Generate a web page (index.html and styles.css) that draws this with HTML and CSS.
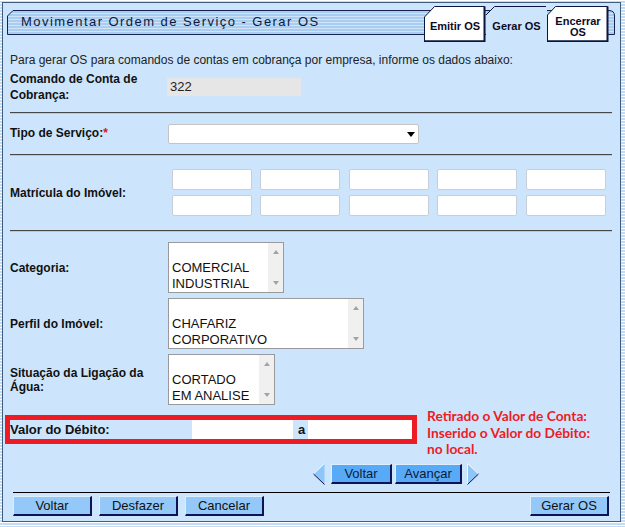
FILE: index.html
```html
<!DOCTYPE html>
<html lang="pt-BR">
<head>
<meta charset="utf-8">
<title>Gerar OS</title>
<link rel="stylesheet" href="styles.css">
</head>
<body>
<div class="panel">
  <div class="header">
    <svg class="bar" width="608" height="25" viewBox="0 0 608 25">
      <defs>
        <pattern id="stripes" width="8" height="3" patternUnits="userSpaceOnUse">
          <rect width="8" height="3" fill="#a9cdf1"/>
          <rect width="8" height="1" fill="#cfe4f9"/>
        </pattern>
      </defs>
      <path d="M0.5 24.5 V6 L6 0.5 H602 Q607.5 0.5 607.5 6 V24.5 Z" fill="url(#stripes)" stroke="#17234d"/>
    </svg>
    <div class="title">Movimentar Ordem de Serviço - Gerar OS</div>
    <div class="tabs">
      <div class="tab tab-emitir">
        <svg class="tab-bg" width="62" height="36" viewBox="0 0 62 36">
          <path d="M0.5 36 V11 L10.5 0.5 H60.5 V35 H0.5" fill="#ffffff" stroke="#0c1440"/>
          <path d="M60.5 0.5 V35.5 H0.5" fill="none" stroke="#0c1440" stroke-width="2"/>
        </svg>
        <span>Emitir OS</span>
      </div>
      <div class="tab tab-gerar">
        <svg class="tab-bg" width="61" height="36" viewBox="0 0 61 36">
          <path d="M0 36 V9 L8.5 0 H61 V36 Z" fill="#cce5fc"/>
          <path d="M0 9 L8.5 0.5 H60" fill="none" stroke="#0c1440"/>
        </svg>
        <span>Gerar OS</span>
      </div>
      <div class="tab tab-encerrar">
        <svg class="tab-bg" width="62" height="36" viewBox="0 0 62 36">
          <path d="M0.5 36 V9 L8.5 0.5 H60.5 V35 H0.5" fill="#ffffff" stroke="#0c1440"/>
          <path d="M60.5 0.5 V35.5 H0.5" fill="none" stroke="#0c1440" stroke-width="2"/>
        </svg>
        <span>Encerrar<br>OS</span>
      </div>
    </div>
  </div>

  <div class="content">
    <p class="intro">Para gerar OS para comandos de contas em cobrança por empresa, informe os dados abaixo:</p>

    <div class="row row-comando">
      <div class="lbl">Comando de Conta de<br>Cobrança:</div>
      <div class="readonly">322</div>
    </div>

    <div class="sep sep1"></div>

    <div class="row row-tipo">
      <div class="lbl lbl-tipo">Tipo de Serviço:<span class="req">*</span></div>
      <div class="select">
        <svg width="8" height="5" viewBox="0 0 8 5"><path d="M0 0 H8 L4 5 Z" fill="#000"/></svg>
      </div>
    </div>

    <div class="sep sep2"></div>

    <div class="row row-mat">
      <div class="lbl">Matrícula do Imóvel:</div>
      <div class="grid">
        <div class="field"></div><div class="field"></div><div class="field"></div><div class="field"></div><div class="field"></div>
        <div class="field"></div><div class="field"></div><div class="field"></div><div class="field"></div><div class="field"></div>
      </div>
    </div>

    <div class="sep sep3"></div>

    <div class="row row-list row-cat">
      <div class="lbl">Categoria:</div>
      <div class="listbox lb-cat">
        <div class="opts"><div class="opt">&nbsp;</div><div class="opt">COMERCIAL</div><div class="opt">INDUSTRIAL</div></div>
        <div class="sbar"><i class="up"></i><i class="down"></i></div>
      </div>
    </div>

    <div class="row row-list row-perfil">
      <div class="lbl">Perfil do Imóvel:</div>
      <div class="listbox lb-perfil">
        <div class="opts"><div class="opt">&nbsp;</div><div class="opt">CHAFARIZ</div><div class="opt">CORPORATIVO</div></div>
        <div class="sbar"><i class="up"></i><i class="down"></i></div>
      </div>
    </div>

    <div class="row row-list row-sit">
      <div class="lbl lbl-sit">Situação da Ligação da<br>Água:</div>
      <div class="listbox lb-sit">
        <div class="opts"><div class="opt">&nbsp;</div><div class="opt">CORTADO</div><div class="opt">EM ANALISE</div></div>
        <div class="sbar"><i class="up"></i><i class="down"></i></div>
      </div>
    </div>

    <div class="row row-valor">
      <div class="redbox">
        <div class="lbl-valor">Valor do Débito:</div>
        <div class="vfield v1"></div>
        <span class="a">a</span>
        <div class="vfield v2"></div>
      </div>
      <div class="note">Retirado o Valor de Conta:<br>Inserido o Valor do Débito:<br>no local.</div>
    </div>

    <div class="nav">
      <svg class="arrow" width="12" height="22" viewBox="0 0 12 22">
        <polygon points="11.5,0.5 0.5,11 11.5,21.5" fill="#8ec6f7"/>
        <path d="M11.5 0.5 L0.5 11" stroke="#eef7ff" fill="none"/>
        <path d="M0.5 11 L11.5 21.5" stroke="#0c1450" fill="none"/>
      </svg>
      <button class="btn-nav nav-voltar">Voltar</button>
      <button class="btn-nav nav-avancar">Avançar</button>
      <svg class="arrow arrow-r" width="12" height="22" viewBox="0 0 12 22">
        <polygon points="0.5,0.5 11.5,11 0.5,21.5" fill="#8ec6f7"/>
        <path d="M0.5 21.5 V0.5 L11.5 11" stroke="#eef7ff" fill="none"/>
        <path d="M11.5 11 L0.5 21.5" stroke="#0c1450" fill="none"/>
      </svg>
    </div>

    <div class="rule"></div>

    <div class="buttons">
      <button class="btn">Voltar</button>
      <button class="btn">Desfazer</button>
      <button class="btn">Cancelar</button>
      <button class="btn btn-gerar">Gerar OS</button>
    </div>
  </div>
</div>
</body>
</html>
```

FILE: styles.css
```css
* { box-sizing: border-box; }
html, body { margin: 0; padding: 0; }
body {
  width: 625px;
  height: 527px;
  overflow: hidden;
  padding: 2px 4px 0 2px;
  background: repeating-linear-gradient(to bottom, #ffffff 0 1px, #c4dcf3 1px 3px);
  font-family: "Liberation Sans", Arial, sans-serif;
  color: #111;
}
.panel {
  height: 520px;
  border: 1px solid #3e5d80;
  background: #cce5fc;
}

/* header */
.header {
  position: relative;
  height: 39px;
  display: flex;
  align-items: flex-start;
}
.bar { position: absolute; left: 4px; top: 7px; }
.title {
  position: relative;
  margin: 11px 0 0 18px;
  font-size: 13px;
  line-height: 16px;
  letter-spacing: 1.45px;
  color: #0c1a40;
  white-space: nowrap;
}
.tabs {
  position: relative;
  display: flex;
  margin: 3px 11px 0 auto;
}
.tab {
  position: relative;
  height: 36px;
  display: flex;
  align-items: center;
  justify-content: center;
  padding-top: 4px;
  font-size: 11px;
  font-weight: bold;
  line-height: 12px;
  text-align: center;
  color: #0b0b25;
}
.tab-bg { position: absolute; left: 0; top: 0; }
.tab span { position: relative; }
.tab-emitir { width: 62px; }
.tab-gerar { width: 61px; }
.tab-encerrar { width: 62px; padding-top: 5px; line-height: 11px; }

/* content */
.content { padding: 0 8px 0 7px; }
.intro {
  margin: 11px 0 0;
  font-size: 12px;
  line-height: 14px;
  color: #222;
  white-space: nowrap;
}
.row { display: flex; align-items: center; }
.lbl {
  width: 158px;
  flex: none;
  font-size: 12px;
  font-weight: bold;
  line-height: 16px;
  color: #111;
}
.row-comando { margin-top: 4px; height: 32px; }
.readonly {
  width: 134px;
  height: 18px;
  margin-left: -1px;
  padding-left: 3px;
  background: #e6e6e6;
  font-size: 13px;
  line-height: 18px;
  color: #222;
}
.sep {
  border-top: 1px solid #474747;
  border-bottom: 1px solid #b4c9dd;
}
.sep1 { margin-top: 9px; }
.sep2 { margin-top: 10px; }
.sep3 { margin-top: 14px; }

.row-tipo { margin-top: 10px; height: 20px; align-items: flex-start; }
.lbl-tipo { margin-top: 1px; }
.req { color: #e0101a; }
.select {
  width: 251px;
  height: 20px;
  background: #fff;
  border: 1px solid #c4c4c4;
  border-radius: 2px;
  display: flex;
  justify-content: flex-end;
  align-items: center;
  padding-right: 3px;
}
.select svg { display: block; }

.row-mat { margin-top: 13px; height: 47px; }
.grid {
  display: grid;
  grid-template-columns: repeat(5, 80px);
  grid-auto-rows: 21px;
  column-gap: 8.5px;
  row-gap: 5px;
  margin-left: 3.5px;
}
.field {
  background: #fff;
  border: 1px solid #c8ced6;
  border-radius: 2px;
}

.row-list { height: 51px; }
.row-cat { margin-top: 10px; }
.row-perfil, .row-sit { margin-top: 5px; }
.lbl-sit { line-height: 14px; }
.listbox {
  display: flex;
  height: 51px;
  border: 1px solid #9a9a9a;
  background: #fff;
}
.lb-cat { width: 116px; }
.lb-perfil { width: 196px; }
.lb-sit { width: 107px; }
.opts {
  flex: 1;
  overflow: hidden;
  padding: 1px 0 0 3px;
  font-size: 13px;
  line-height: 16px;
  color: #111;
  white-space: nowrap;
}
.sbar {
  width: 15px;
  flex: none;
  background: #f0f0f0;
  display: flex;
  flex-direction: column;
  justify-content: space-between;
  align-items: center;
  padding: 7px 0;
}
.sbar i { display: block; width: 0; height: 0; border-left: 3.5px solid transparent; border-right: 3.5px solid transparent; }
.sbar .up { border-bottom: 4px solid #a3a3a3; }
.sbar .down { border-top: 4px solid #a3a3a3; }

.row-valor { margin-top: 10px; height: 29px; align-items: flex-start; }
.redbox {
  width: 412px;
  height: 29px;
  margin-left: -5px;
  border: 5px solid #ed1c24;
  display: flex;
  align-items: center;
  flex: none;
}
.lbl-valor {
  width: 182px;
  font-size: 13px;
  font-weight: bold;
  line-height: 19px;
  color: #111;
}
.vfield { height: 19px; background: #fff; }
.v1 { width: 101px; }
.v2 { flex: 1; }
.a {
  font-size: 13px;
  font-weight: bold;
  margin: 0 3px 0 5px;
}
.note {
  margin: -7px 0 0 10px;
  font-family: Lato, "Liberation Sans", sans-serif;
  font-weight: bold;
  font-size: 13.75px;
  line-height: 16.7px;
  color: #ed1c24;
  white-space: nowrap;
}

.nav {
  margin: 19px 0 0 303px;
  height: 22px;
  display: flex;
  align-items: center;
}
.arrow { display: block; }
.btn-nav, .btn {
  margin: 0;
  padding: 0;
  height: 20px;
  font-family: "Liberation Sans", Arial, sans-serif;
  font-size: 13px;
  line-height: 17px;
  text-align: center;
  border-style: solid;
  border-width: 1px 2px 2px 1px;
  border-color: #dcefff #0c1456 #0c1456 #dcefff;
  border-radius: 0;
}
.btn-nav { background: #58aaf6; color: #0c1a3a; }
.nav-voltar { width: 61px; margin-left: 6px; }
.nav-avancar { width: 67px; margin-left: 3px; }
.arrow-r { margin-left: 5px; }

.rule {
  margin: 7px 2px 0 3px;
  height: 1px;
  background: #000;
}
.buttons {
  margin: 3px 3px 0 3px;
  display: flex;
  gap: 7px;
}
.btn { width: 79px; background: #93c8f8; color: #111; }
.btn-gerar { margin-left: auto; }
```
